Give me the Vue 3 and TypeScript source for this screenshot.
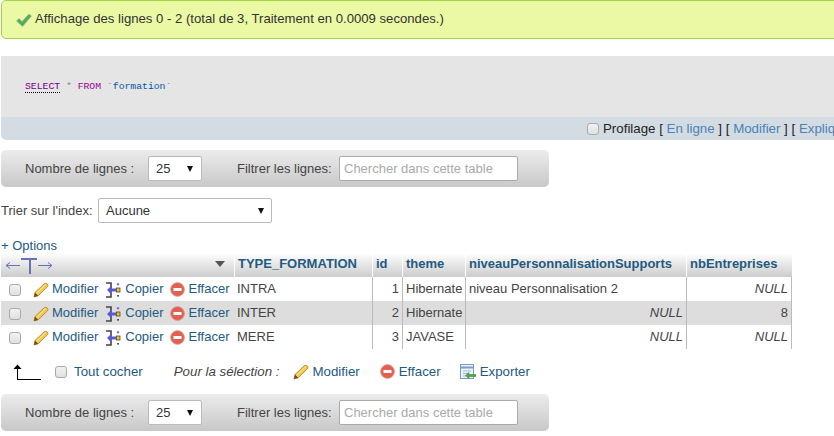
<script setup lang="ts">
interface Row {
  type: string
  id: number
  theme: string
  niveau: string | null
  nb: string | null
}

const rows: Row[] = [
  { type: 'INTRA', id: 1, theme: 'Hibernate', niveau: 'niveau Personnalisation 2', nb: null },
  { type: 'INTER', id: 2, theme: 'Hibernate', niveau: null, nb: '8' },
  { type: 'MERE', id: 3, theme: 'JAVASE', niveau: null, nb: null }
]

const columns = ['TYPE_FORMATION', 'id', 'theme', 'niveauPersonnalisationSupports', 'nbEntreprises']
</script>

<template>
  <div class="page">
    <div class="success">
      <svg class="check" width="16" height="14" viewBox="0 0 16 14">
        <path d="M0.5 8 L3 5.5 L6 8.5 L13 1 L15.5 3 L6.5 13.5 Z" fill="#5aa85a" stroke="#8cc68c" stroke-width=".7" />
      </svg>
      <span>Affichage des lignes 0 - 2 (total de 3, Traitement en 0.0009 secondes.)</span>
    </div>

    <div class="sql">
      <div class="sql-code"><span class="kw kw-select">SELECT</span><span class="star"> * </span><span class="kw">FROM</span><span class="tick"> `</span><span class="name">formation</span><span class="tick">`</span></div>
      <div class="sql-links">
        <input type="checkbox" class="check-box" />
        <span>Profilage [ <a>En ligne</a> ] [ <a>Modifier</a> ] [ <a>Expliquer SQL</a> ] [ <a>Créer le code source PHP</a> ]</span>
      </div>
    </div>

    <div class="nav-bar">
      <label class="nav-label">Nombre de lignes :</label>
      <div class="dropdown small"><span>25</span><i class="caret"></i></div>
      <label class="filter-label">Filtrer les lignes:</label>
      <div class="search">Chercher dans cette table</div>
    </div>

    <div class="sort-row">
      <label>Trier sur l'index:</label>
      <div class="dropdown wide"><span>Aucune</span><i class="caret"></i></div>
    </div>

    <div class="options"><a>+ Options</a></div>

    <table class="results">
      <colgroup>
        <col class="c-actions" />
        <col class="c-type" />
        <col class="c-id" />
        <col class="c-theme" />
        <col class="c-niveau" />
        <col class="c-nb" />
      </colgroup>
      <thead>
        <tr>
          <th class="th-actions">
            <div class="th-inner">
              <svg width="46" height="20" viewBox="0 0 46 20">
                <g fill="none" stroke="#6573b5">
                  <path d="M0 10.5 H14 M0 10.5 L4 7.5 M0 10.5 L4 13.5" />
                  <path d="M32 10.5 H46 M46 10.5 L42 7.5 M46 10.5 L42 13.5" />
                  <path d="M15 4 H31" stroke-width="2" />
                  <path d="M24 3 V19" stroke-width="2" />
                </g>
              </svg>
              <i class="sort-caret"></i>
            </div>
          </th>
          <th v-for="c in columns" :key="c"><a>{{ c }}</a></th>
        </tr>
      </thead>
      <tbody>
        <tr v-for="r in rows" :key="r.id">
          <td class="td-actions">
            <div class="actions">
              <input type="checkbox" class="check-box row-box" />
              <a class="act act-edit">
                <svg width="16" height="16" viewBox="0 0 16 16">
                  <path d="M1 15 L2 10.5 L11.5 1.5 Q13 0.8 14.5 2.2 Q15.4 3.6 14.4 4.8 L5.2 13.8 Z" fill="#f2c94f" stroke="#b9842a" stroke-width=".9" />
                  <path d="M1 15 L2 10.5 L5.2 13.8 Z" fill="#7a4a1f" />
                  <path d="M3.5 11.5 L12.5 2.8" stroke="#fbe8a6" stroke-width="1" />
                </svg>
                Modifier
              </a>
              <a class="act act-copy">
                <svg width="15" height="16" viewBox="0 0 15 16">
                  <path d="M0 1 H5 V15 H0" stroke="#444" stroke-width="1.6" fill="none" />
                  <path d="M1 8 L5.5 3.5 V6.5 H10 V9.5 H5.5 V12.5 Z" fill="#5b5bd6" />
                  <rect x="10.5" y="6" width="3.5" height="4" fill="#f5c518" stroke="#333" stroke-width=".7" />
                  <path d="M12 1 V3.5 M10.8 2.2 H13.2" stroke="#5b5bd6" />
                  <rect x="11.2" y="13" width="1.8" height="1.6" fill="#444" />
                </svg>
                Copier
              </a>
              <a class="act act-del">
                <svg width="15" height="15" viewBox="0 0 15 15">
                  <circle cx="7.5" cy="7.5" r="6.8" fill="#e2604f" stroke="#d98a7e" />
                  <rect x="3.5" y="6" width="8" height="3" fill="#fff" />
                </svg>
                Effacer
              </a>
            </div>
          </td>
          <td>{{ r.type }}</td>
          <td class="num">{{ r.id }}</td>
          <td>{{ r.theme }}</td>
          <td :class="{ nullv: r.niveau === null }">{{ r.niveau ?? 'NULL' }}</td>
          <td :class="r.nb === null ? 'nullv' : 'num'">{{ r.nb ?? 'NULL' }}</td>
        </tr>
      </tbody>
    </table>

    <div class="bulk">
      <svg class="up-arrow" width="28" height="16" viewBox="0 0 28 16">
        <path d="M4 15.5 H28 M4.5 15.5 V4" stroke="#000" fill="none" />
        <path d="M0.5 5 L4.5 0.5 L8.5 5 Z" fill="#000" />
      </svg>
      <input type="checkbox" class="check-box bulk-box" />
      <a class="all">Tout cocher</a>
      <em class="for-sel">Pour la sélection :</em>
      <a class="bulk-act b-edit">
        <svg width="16" height="16" viewBox="0 0 16 16">
          <path d="M1 15 L2 10.5 L11.5 1.5 Q13 0.8 14.5 2.2 Q15.4 3.6 14.4 4.8 L5.2 13.8 Z" fill="#f2c94f" stroke="#b9842a" stroke-width=".9" />
          <path d="M1 15 L2 10.5 L5.2 13.8 Z" fill="#7a4a1f" />
          <path d="M3.5 11.5 L12.5 2.8" stroke="#fbe8a6" stroke-width="1" />
        </svg>
        Modifier
      </a>
      <a class="bulk-act b-del">
        <svg width="15" height="15" viewBox="0 0 15 15">
          <circle cx="7.5" cy="7.5" r="6.8" fill="#e2604f" stroke="#d98a7e" />
          <rect x="3.5" y="6" width="8" height="3" fill="#fff" />
        </svg>
        Effacer
      </a>
      <a class="bulk-act b-exp">
        <svg width="16" height="16" viewBox="0 0 16 16">
          <rect x="0.5" y="0.5" width="13" height="14" fill="#eef3fa" stroke="#7c9cc8" />
          <path d="M1 3.5 H13" stroke="#7c9cc8" stroke-width="2" />
          <path d="M3 7 H11 M3 9.5 H8 M3 12 H8" stroke="#9fb6d6" />
          <path d="M16 10.5 H9 V8.5 L5.5 11.5 L9 14.5 V12.5 H16 Z" fill="#4fa84a" stroke="#2f7a2f" stroke-width=".5" />
        </svg>
        Exporter
      </a>
    </div>

    <div class="nav-bar nav-bottom">
      <label class="nav-label">Nombre de lignes :</label>
      <div class="dropdown small"><span>25</span><i class="caret"></i></div>
      <label class="filter-label">Filtrer les lignes:</label>
      <div class="search">Chercher dans cette table</div>
    </div>
  </div>
</template>

<style>
html, body {
  margin: 0;
  background: #fff;
  overflow: hidden;
}
</style>

<style scoped>
.page {
  width: 834px;
  height: 436px;
  overflow: hidden;
  font-family: "Liberation Sans", Arial, sans-serif;
  font-size: 13px;
  color: #444;
}

a {
  color: #235a81;
}

.success {
  display: flex;
  align-items: center;
  box-sizing: border-box;
  width: 880px;
  height: 39px;
  margin-left: 1px;
  padding: 0 0 2px 14px;
  gap: 3px;
  background: #ebf8a4;
  border: 1px solid #a2d246;
  border-radius: 5px;
  font-size: 13.15px;
  color: #333;
}

.check {
  flex: none;
  margin-top: 2px;
}

.sql {
  width: 880px;
  margin: 17px 0 0 1px;
  border-radius: 0 0 0 5px;
  overflow: hidden;
}

.sql-code {
  box-sizing: border-box;
  height: 61px;
  padding: 24px 0 0 24px;
  background: #e5e5e5;
  font-family: "Liberation Mono", monospace;
  font-size: 9.75px;
  line-height: 14px;
  white-space: pre;
}

.kw {
  color: #909;
}

.kw-select {
  color: #708;
  border-bottom: 1px dotted #000;
}

.star {
  color: #888;
}

.tick {
  color: #555;
}

.name {
  color: #05a;
}

.sql-links {
  display: flex;
  align-items: center;
  box-sizing: border-box;
  height: 23px;
  padding-left: 586px;
  gap: 4px;
  background: #d3dce3;
  color: #222;
  font-size: 13.3px;
  white-space: nowrap;
}

.sql-links a {
  color: #4c82b4;
}

.check-box {
  appearance: none;
  box-sizing: border-box;
  width: 12px;
  height: 12px;
  margin: 0;
  flex: none;
  background: linear-gradient(#f2f2f2, #e0e0e0);
  border: 1px solid #aaa;
  border-radius: 3px;
}

.nav-bar {
  display: flex;
  align-items: center;
  box-sizing: border-box;
  width: 548px;
  height: 37px;
  margin: 10px 0 0 1px;
  padding-left: 24px;
  background: linear-gradient(#ececec, #c8c8c8);
  border-radius: 5px;
  color: #444;
}

.nav-label {
  width: 123px;
}

.filter-label {
  margin-left: 35px;
  width: 102px;
}

.dropdown {
  display: flex;
  align-items: center;
  justify-content: space-between;
  box-sizing: border-box;
  height: 25px;
  background: #fff;
  border: 1px solid #bbb;
  border-radius: 2px;
  color: #333;
}

.small {
  width: 54px;
  padding: 0 8px 0 7px;
}

.wide {
  width: 174px;
  padding: 0 7px;
}

.caret {
  width: 0;
  height: 0;
  border-left: 3.5px solid transparent;
  border-right: 3.5px solid transparent;
  border-top: 6px solid #111;
}

.search {
  box-sizing: border-box;
  width: 179px;
  height: 25px;
  padding: 4px;
  background: #fff;
  border: 1px solid #aaa;
  border-radius: 2px;
  color: #aaa;
  line-height: 15px;
}

.sort-row {
  display: flex;
  align-items: center;
  margin-top: 11px;
  padding-left: 1px;
}

.sort-row label {
  width: 97px;
}

.options {
  height: 16px;
  margin-top: 14px;
  padding: 1px 0 0 1px;
  line-height: 16px;
}

.results {
  table-layout: fixed;
  width: 791px;
  margin: -1px 0 0 1px;
  border-collapse: separate;
  border-spacing: 0;
}

.c-actions { width: 233px; }
.c-type { width: 138px; }
.c-id { width: 30px; }
.c-theme { width: 63px; }
.c-niveau { width: 221px; }
.c-nb { width: 106px; }

th {
  height: 24px;
  padding: 0 3px 3px;
  box-sizing: border-box;
  background: linear-gradient(#fff, #ccc);
  border-left: 1px solid #fff;
  text-align: left;
  font-weight: bold;
  white-space: nowrap;
}

.th-actions {
  padding: 0;
  border-left: 0;
}

.th-inner {
  display: flex;
  align-items: center;
  justify-content: space-between;
  padding: 0 9px 0 5px;
}

.sort-caret {
  width: 0;
  height: 0;
  margin-top: -3px;
  border-left: 5.5px solid transparent;
  border-right: 5.5px solid transparent;
  border-top: 6px solid #555;
}

td {
  height: 24px;
  box-sizing: border-box;
  padding: 0 3px 2px;
  white-space: nowrap;
}

td:nth-child(n + 3) {
  border-left: 1px solid #bbb;
}

td:last-child {
  border-right: 1px solid #bbb;
}

.td-actions {
  padding: 0;
}

tbody tr:nth-child(2) td {
  background: #ddd;
}

.num,
.nullv {
  text-align: right;
}

.nullv {
  font-style: italic;
}

.actions {
  display: flex;
  align-items: center;
}

.row-box {
  margin: 1px 0 0 8px;
}

.act {
  display: flex;
  align-items: center;
  gap: 3px;
  padding-bottom: 2px;
}

.act svg {
  margin-top: 3px;
}

.act-edit {
  margin-left: 12px;
}

.act-copy {
  margin-left: 8px;
  gap: 4px;
}

.act-del {
  margin-left: 6px;
  gap: 4px;
}

.bulk {
  display: flex;
  align-items: center;
  height: 45px;
  padding-left: 13px;
  font-size: 13.3px;
}

.up-arrow {
  flex: none;
}

.bulk-box {
  margin-left: 14px;
}

.all {
  margin-left: 7px;
}

.for-sel {
  margin-left: 31px;
}

.bulk-act {
  display: flex;
  align-items: center;
  gap: 4px;
}

.b-edit {
  margin-left: 14px;
  gap: 3px;
}

.b-del {
  margin-left: 20px;
}

.b-exp {
  margin-left: 19px;
}

.nav-bottom {
  margin-top: 0;
}
</style>
